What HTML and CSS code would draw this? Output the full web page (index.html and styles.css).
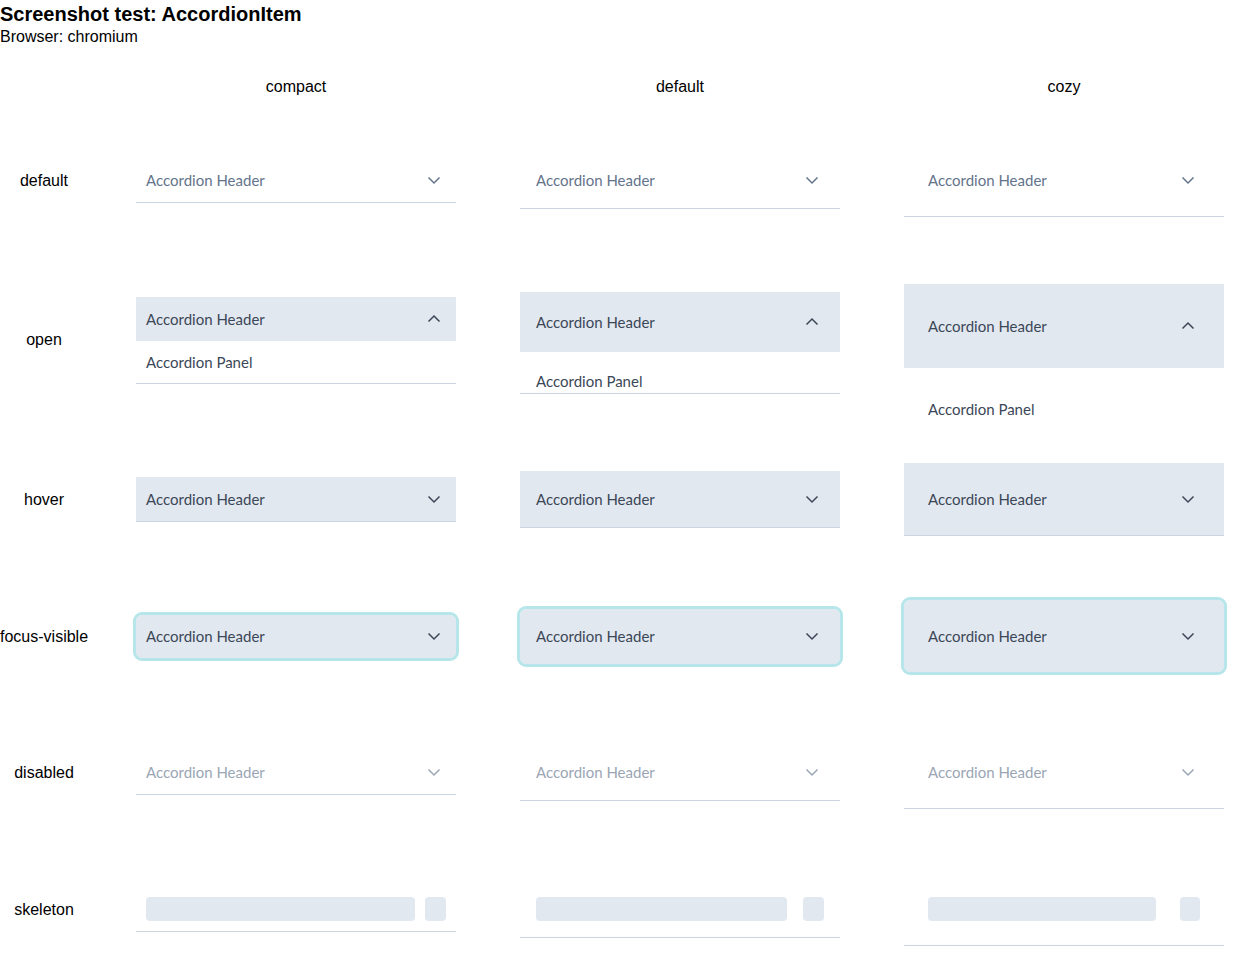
FILE: index.html
```html
<!DOCTYPE html>
<html>
<head>
<meta charset="utf-8">
<link rel="stylesheet" href="styles.css">
</head>
<body>
<div class="page-title">Screenshot test: AccordionItem</div>
<div class="page-sub">Browser: chromium</div>

<div class="grid">
  <div></div>
  <div class="colhead">compact</div>
  <div class="colhead">default</div>
  <div class="colhead">cozy</div>

  <!-- default -->
  <div class="label">default</div>
  <div class="item sm"><div class="hdr"><span>Accordion Header</span><svg class="chev" viewBox="0 0 16 16"><path d="M2.5 5.5 L8 11 L13.5 5.5"/></svg></div></div>
  <div class="item md"><div class="hdr"><span>Accordion Header</span><svg class="chev" viewBox="0 0 16 16"><path d="M2.5 5.5 L8 11 L13.5 5.5"/></svg></div></div>
  <div class="item lg"><div class="hdr"><span>Accordion Header</span><svg class="chev" viewBox="0 0 16 16"><path d="M2.5 5.5 L8 11 L13.5 5.5"/></svg></div></div>

  <!-- open -->
  <div class="label">open</div>
  <div class="item sm open open-sm"><div class="hdr"><span>Accordion Header</span><svg class="chev" viewBox="0 0 16 16"><path d="M2.5 10.5 L8 5 L13.5 10.5"/></svg></div><div class="panel">Accordion Panel</div></div>
  <div class="item md open open-md"><div class="hdr"><span>Accordion Header</span><svg class="chev" viewBox="0 0 16 16"><path d="M2.5 10.5 L8 5 L13.5 10.5"/></svg></div><div class="panel">Accordion Panel</div></div>
  <div class="item lg open open-lg"><div class="hdr"><span>Accordion Header</span><svg class="chev" viewBox="0 0 16 16"><path d="M2.5 10.5 L8 5 L13.5 10.5"/></svg></div><div class="panel">Accordion Panel</div></div>

  <!-- hover -->
  <div class="label">hover</div>
  <div class="item sm hover"><div class="hdr"><span>Accordion Header</span><svg class="chev" viewBox="0 0 16 16"><path d="M2.5 5.5 L8 11 L13.5 5.5"/></svg></div></div>
  <div class="item md hover"><div class="hdr"><span>Accordion Header</span><svg class="chev" viewBox="0 0 16 16"><path d="M2.5 5.5 L8 11 L13.5 5.5"/></svg></div></div>
  <div class="item lg hover"><div class="hdr"><span>Accordion Header</span><svg class="chev" viewBox="0 0 16 16"><path d="M2.5 5.5 L8 11 L13.5 5.5"/></svg></div></div>

  <!-- focus-visible -->
  <div class="label">focus-visible</div>
  <div class="item sm focus"><div class="hdr"><span>Accordion Header</span><svg class="chev" viewBox="0 0 16 16"><path d="M2.5 5.5 L8 11 L13.5 5.5"/></svg></div></div>
  <div class="item md focus"><div class="hdr"><span>Accordion Header</span><svg class="chev" viewBox="0 0 16 16"><path d="M2.5 5.5 L8 11 L13.5 5.5"/></svg></div></div>
  <div class="item lg focus"><div class="hdr"><span>Accordion Header</span><svg class="chev" viewBox="0 0 16 16"><path d="M2.5 5.5 L8 11 L13.5 5.5"/></svg></div></div>

  <!-- disabled -->
  <div class="label">disabled</div>
  <div class="item sm disabled"><div class="hdr"><span>Accordion Header</span><svg class="chev" viewBox="0 0 16 16"><path d="M2.5 5.5 L8 11 L13.5 5.5"/></svg></div></div>
  <div class="item md disabled"><div class="hdr"><span>Accordion Header</span><svg class="chev" viewBox="0 0 16 16"><path d="M2.5 5.5 L8 11 L13.5 5.5"/></svg></div></div>
  <div class="item lg disabled"><div class="hdr"><span>Accordion Header</span><svg class="chev" viewBox="0 0 16 16"><path d="M2.5 5.5 L8 11 L13.5 5.5"/></svg></div></div>

  <!-- skeleton -->
  <div class="label">skeleton</div>
  <div class="item sm skel"><div class="hdr"><span class="bar"></span><span class="sq"></span></div></div>
  <div class="item md skel"><div class="hdr"><span class="bar"></span><span class="sq"></span></div></div>
  <div class="item lg skel"><div class="hdr"><span class="bar"></span><span class="sq"></span></div></div>
</div>
</body>
</html>
```

FILE: styles.css
```css
* { box-sizing: border-box; }

body {
  margin: 0;
  font-family: "Liberation Sans", Arial, sans-serif;
  color: #000;
  background: #fff;
}

.page-title {
  font-size: 20px;
  font-weight: bold;
  line-height: 28px;
  height: 27px;
}

.page-sub {
  font-size: 16px;
  line-height: 20px;
}

.grid {
  display: grid;
  grid-template-columns: 72px 320px 320px 320px;
  grid-template-rows: 44px 144px 174px 146px 128px 144px 130px;
  column-gap: 64px;
  align-items: center;
  margin-top: 17px;
}

.colhead {
  font-size: 16px;
  text-align: center;
  padding-top: 2px;
}

.label {
  width: 88px;
  text-align: center;
  font-size: 16px;
  white-space: nowrap;
  padding-top: 2px;
}

.item {
  font-family: Lato, "Open Sans", sans-serif;
  font-size: 15px;
  border-bottom: 1px solid #cbd5e1;
  color: #64748b;
}

.hdr {
  display: flex;
  align-items: center;
  justify-content: space-between;
}

.item.sm .hdr { height: 44px; padding: 0 14px 0 10px; }
.item.md .hdr { height: 56px; padding: 0 20px 0 16px; }
.item.lg .hdr { height: 72px; padding: 0 28px 0 24px; }

.chev {
  width: 16px;
  height: 16px;
  fill: none;
  stroke: currentColor;
  stroke-width: 1.5;
}

.open, .hover, .focus { color: #3b4757; }
.open .hdr, .hover .hdr, .focus .hdr { background: #e2e8f0; }

.open { align-self: start; }
.open-sm { margin-top: 45px; }
.open-md { margin-top: 40px; }
.open-lg { margin-top: 32px; border-bottom: none; }

.item.md.open .hdr { height: 60px; }
.item.lg.open .hdr { height: 84px; }

.panel {
  line-height: 20px;
  color: #3b4757;
}
.open-sm .panel { height: 42px; padding: 11px 10px 0; }
.open-md .panel { height: 41px; padding: 19px 16px 0; }
.open-lg .panel { height: 48px; padding: 31px 24px 0; overflow: hidden; }

.focus {
  border-bottom: none;
}
.focus .hdr {
  outline: 3px solid #b6e6ea;
  border-radius: 6px;
}
.item.sm.focus .hdr { height: 43px; }
.item.md.focus .hdr { height: 55px; }
.item.lg.focus .hdr { height: 72px; }

.disabled { color: #9aa6b4; }

.skel .bar {
  height: 24px;
  background: #e2e8f0;
  border-radius: 4px;
}
.skel .sq {
  width: 21px;
  height: 24px;
  background: #e2e8f0;
  border-radius: 4px;
}
.skel.sm .bar { width: 269px; }
.skel.md .bar { width: 251px; }
.skel.lg .bar { width: 228px; }
.item.sm.skel .hdr { padding: 0 10px 0 10px; }
.item.md.skel .hdr { padding: 0 16px 0 16px; }
.item.lg.skel .hdr { padding: 0 24px 0 24px; }
.skel.lg .sq { width: 20px; }
```
